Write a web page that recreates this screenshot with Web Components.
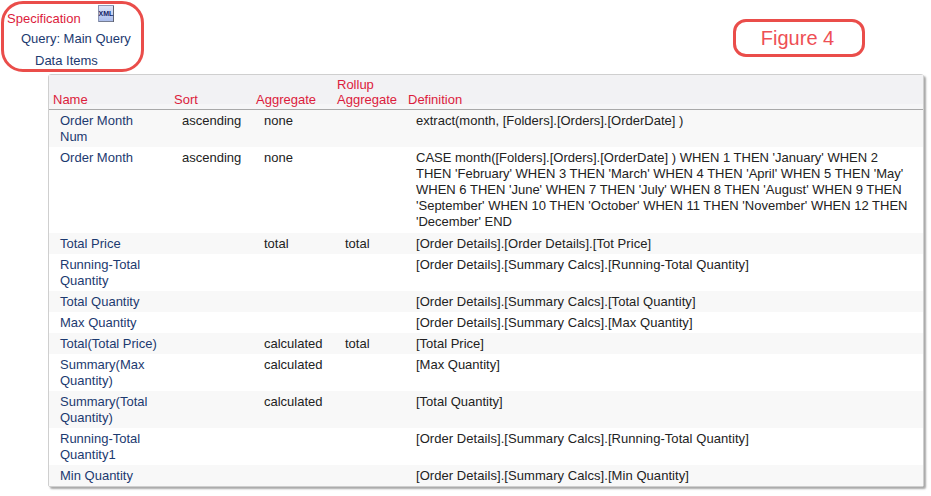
<!DOCTYPE html>
<html><head><meta charset="utf-8"><style>
html,body{margin:0;padding:0;background:#fff;font:13px/16px "Liberation Sans",Arial,sans-serif;overflow:hidden}
#page{width:931px;height:496px;box-sizing:border-box;padding:1px 0 0 1px;display:flex;flex-direction:column}
</style></head><body>
<template id="t-spec"><style>
:host{display:block;box-sizing:border-box;width:143px;height:71px;border:3px solid #ea4d4a;border-radius:22px;font-size:13px;line-height:16px}
.r{white-space:nowrap}
.wrap{display:flex;flex-direction:column;padding:7px 0 0 3px;gap:5px}
.head{color:#dc1c3c;display:flex;height:15px}
.icon{margin:-6px 0 0 17px;width:16px;height:17px}
.q{color:#1c3a70;padding-left:14px}
.d{color:#1c3a70;padding-left:28px;margin-top:1px}
</style><div class="wrap"><div class="head r">Specification<svg class="icon" viewBox="0 0 16 17"><defs><linearGradient id="g" x1="0" y1="0" x2="0" y2="1"><stop offset="0" stop-color="#dfe6f8"/><stop offset="1" stop-color="#a9bcec"/></linearGradient></defs><rect x=".5" y=".5" width="15" height="16" fill="url(#g)" stroke="#8d97b4"/><path d="M15.5 1v16H1" fill="none" stroke="#5e6270"/><text x="8" y="11" text-anchor="middle" font-family="Liberation Sans" font-weight="700" font-size="7" fill="#141f66">XML</text></svg></div>
<div class="q r">Query: Main Query</div><div class="d r">Data Items</div></div></template>

<template id="t-fig"><style>
:host{display:flex;align-items:center;justify-content:center;box-sizing:border-box;width:132px;height:38px;border:3px solid #ea4d4a;border-radius:13px;color:#ee4f55;font-size:20px;line-height:20px;padding-right:3px}
</style><slot></slot></template>

<template id="t-table"><style>
:host{display:block;box-sizing:border-box;width:876px;height:413px;margin-left:47px;border:1px solid #cfcfcf;border-radius:3px 3px 2px 2px;box-shadow:2px 2px 2px #a8a8a8;background:#fff}
.h{display:grid;grid-template-columns:121px 82px 81px 71px 1fr;align-items:end;height:32px;background:linear-gradient(#f2f2f4 0,#f2f2f4 85%,#f6f6f7 85%);border-bottom:1px solid #a9a9a9;color:#dc1c3c;line-height:15px;padding-bottom:2px}
.h span{padding-left:4px}
</style><div class="h"><span>Name</span><span>Sort</span><span>Aggregate</span><span>Rollup<br>Aggregate</span><span>Definition</span></div><slot></slot></template>

<template id="t-row"><style>
:host{display:grid;grid-template-columns:121px 82px 81px 71px 1fr;padding:3px 0 2px;color:#222}
:host([alt]){background:#f8f8f8}
div{padding-left:12px}
.n{color:#1c3a70;padding-left:11px;padding-right:12px}
.f{padding-right:13px}
:host([wide]) .f{letter-spacing:.06px}
</style><div class="n"><slot name="n"></slot></div><div id="s"></div><div id="a"></div><div id="r"></div><div class="f"><slot></slot></div></template>

<div id="page">
<div style="display:flex;height:73px;align-items:flex-start">
<spec-panel></spec-panel><fig-label style="margin:18px 0 0 589px">Figure 4</fig-label>
</div>
<def-table>
<def-row alt sort="ascending" agg="none"><span slot="n">Order Month Num</span>extract(month, [Folders].[Orders].[OrderDate] )</def-row>
<def-row sort="ascending" agg="none" style="padding-bottom:3px"><span slot="n">Order Month</span>CASE month([Folders].[Orders].[OrderDate] ) WHEN 1 THEN 'January' WHEN 2 THEN 'February' WHEN 3 THEN 'March' WHEN 4 THEN 'April' WHEN 5 THEN 'May' WHEN 6 THEN 'June' WHEN 7 THEN 'July' WHEN 8 THEN 'August' WHEN 9 THEN 'September' WHEN 10 THEN 'October' WHEN 11 THEN 'November' WHEN 12 THEN 'December' END</def-row>
<def-row alt wide agg="total" rollup="total"><span slot="n">Total Price</span>[Order Details].[Order Details].[Tot Price]</def-row>
<def-row wide><span slot="n">Running-Total Quantity</span>[Order Details].[Summary Calcs].[Running-Total Quantity]</def-row>
<def-row alt wide><span slot="n">Total Quantity</span>[Order Details].[Summary Calcs].[Total Quantity]</def-row>
<def-row wide><span slot="n">Max Quantity</span>[Order Details].[Summary Calcs].[Max Quantity]</def-row>
<def-row alt agg="calculated" rollup="total"><span slot="n">Total(Total Price)</span>[Total Price]</def-row>
<def-row agg="calculated"><span slot="n">Summary(Max Quantity)</span>[Max Quantity]</def-row>
<def-row alt agg="calculated"><span slot="n">Summary(Total Quantity)</span>[Total Quantity]</def-row>
<def-row wide><span slot="n">Running-Total Quantity1</span>[Order Details].[Summary Calcs].[Running-Total Quantity]</def-row>
<def-row alt wide><span slot="n">Min Quantity</span>[Order Details].[Summary Calcs].[Min Quantity]</def-row>
</def-table>
</div>
<script>
function base(id){return class extends HTMLElement{constructor(){super();this.attachShadow({mode:'open'}).appendChild(document.getElementById(id).content.cloneNode(true));}}}
customElements.define('spec-panel',base('t-spec'));
customElements.define('fig-label',base('t-fig'));
customElements.define('def-table',base('t-table'));
customElements.define('def-row',class extends base('t-row'){connectedCallback(){const s=this.shadowRoot;s.getElementById('s').textContent=this.getAttribute('sort')||'';s.getElementById('a').textContent=this.getAttribute('agg')||'';s.getElementById('r').textContent=this.getAttribute('rollup')||'';}});
</script>
</body></html>
